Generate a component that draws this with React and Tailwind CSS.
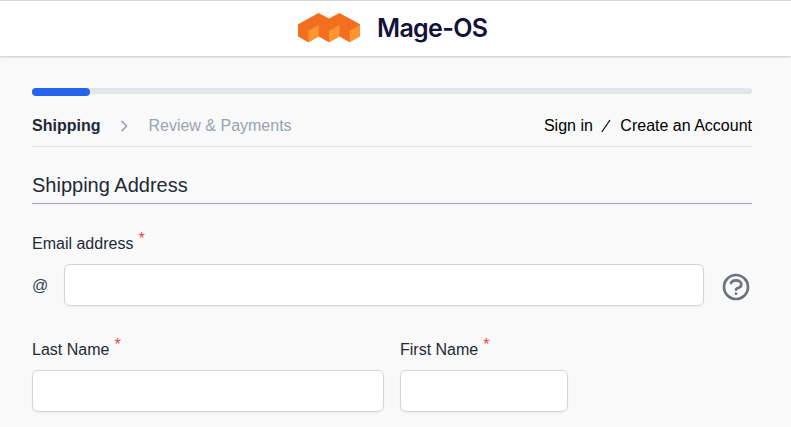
function Logo() {
  return (
    <svg className="shrink-0" width="62" height="30" viewBox="0 0 62 30" aria-hidden="true">
      <path fill="#f26f1f" d="M0 11.3 20.6 0 31 5.6 41.4 0 62 11.3V22.5L51.7 29.2 41.4 23.5 31 29.2 20.6 23.5 10.3 29.2 0 23.5Z" />
      <path fill="#ff9433" d="M10.3 17.8 20.6 12v11.5l-10.3 5.7ZM31 17.8 41.4 12v11.5L31 29.2ZM51.7 17.8 62 11.8v11.7l-10.3 5.7Z" />
    </svg>
  );
}

function Field({ label, className }) {
  return (
    <div className={className}>
      <label className="block h-6 leading-6">
        {label}
        <span className="relative -top-[5px] ml-[5px] text-[#ef4444]">*</span>
      </label>
      <input className="mt-2 block h-[42px] w-full rounded-md border border-[#d1d5db] bg-white px-3 shadow-[0_1px_2px_rgba(0,0,0,0.05)] outline-none" />
    </div>
  );
}

export default function App() {
  return (
    <div className="h-[427px] overflow-hidden bg-[#f9f9f9] font-['Liberation_Sans',Arial,sans-serif] text-base text-[#1f2937]">
      <header className="flex h-14 justify-center border-t border-[#dadada] bg-white pr-[6px] shadow-[0_1px_2px_rgba(0,0,0,0.2)]">
        <div className="flex h-[54px] w-[189px] items-center gap-[17px]">
          <Logo />
          <span className="whitespace-nowrap font-[Inter,sans-serif] text-[25px] leading-8 font-semibold tracking-[-0.65px] text-[#12123b]">Mage-OS</span>
        </div>
      </header>
      <main className="pt-8 pr-[39px] pl-8">
        <div className="h-1.5 rounded-full bg-[#e2e5ea]">
          <div className="h-2 w-[58px] rounded-full bg-[#2563eb]" />
        </div>
        <nav className="mt-5 flex h-[33px] items-start justify-between border-b border-[#e2e5ea] leading-6">
          <div className="flex items-center">
            <span className="font-bold">Shipping</span>
            <svg className="mr-4 ml-4" width="16" height="16" viewBox="0 0 24 24" fill="none" stroke="#9ca3af" strokeWidth="2.4" strokeLinecap="round" strokeLinejoin="round">
              <path d="m9 5 7 7-7 7" />
            </svg>
            <span className="text-[#9ca3af]">Review &amp; Payments</span>
          </div>
          <div className="flex items-center text-black">
            <span>Sign in</span>
            <svg className="mr-[9px] ml-[8.5px]" width="10" height="14" viewBox="0 0 10 14" fill="none" stroke="currentColor" strokeWidth="1.2">
              <path d="M.8 13 9 1" />
            </svg>
            <span>Create an Account</span>
          </div>
        </nav>
        <h1 className="mt-6 h-[33px] border-b border-[#9ca3af] text-xl leading-7">Shipping Address</h1>
        <div className="mt-7 h-6 leading-6">
          Email address
          <span className="relative -top-[5px] ml-[5px] text-[#ef4444]">*</span>
        </div>
        <div className="mt-2 flex h-[42px] items-center">
          <span className="mt-px w-8 text-[#374151]">@</span>
          <input className="h-[42px] w-[640px] rounded-md border border-[#d1d5db] bg-white px-3 shadow-[0_1px_2px_rgba(0,0,0,0.05)] outline-none" />
          <svg className="mt-1 ml-4" width="32" height="32" viewBox="0 0 24 24" fill="none" stroke="#6b7280" strokeWidth="2" strokeLinecap="round" strokeLinejoin="round">
            <path d="M8.228 9c.549-1.165 2.03-2 3.772-2 2.21 0 4 1.343 4 3 0 1.4-1.278 2.575-3.006 2.907-.542.104-.994.54-.994 1.093m0 3h.01M21 12a9 9 0 11-18 0 9 9 0 0118 0z" />
          </svg>
        </div>
        <div className="mt-8 flex gap-4">
          <Field label="Last Name" className="w-[352px]" />
          <Field label="First Name" className="w-[168px]" />
        </div>
      </main>
    </div>
  );
}
